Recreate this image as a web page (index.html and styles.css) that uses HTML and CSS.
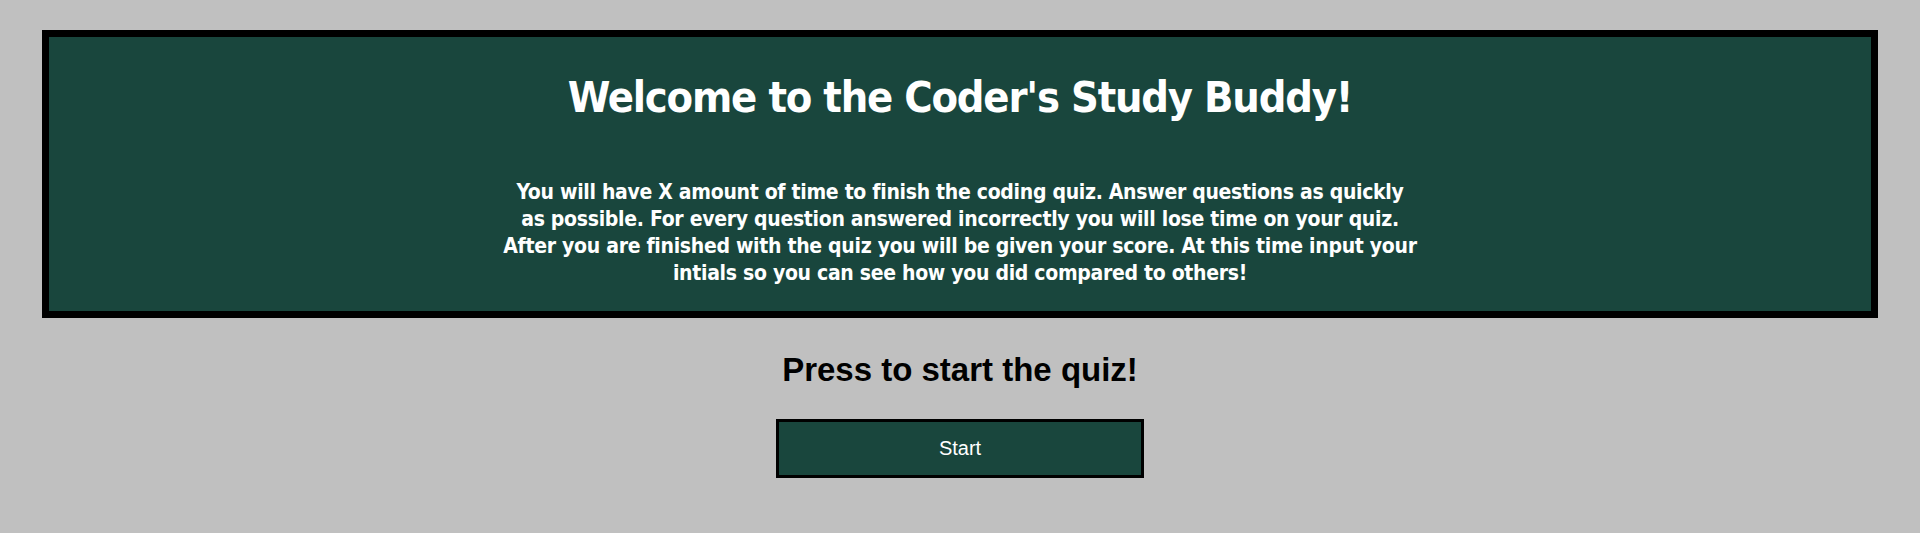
FILE: index.html
```html
<!DOCTYPE html>
<html lang="en">
<head>
<meta charset="utf-8">
<title>Coder's Study Buddy</title>
<link rel="stylesheet" href="styles.css">
</head>
<body>
  <header class="intro">
    <h1 class="intro-title">Welcome to the Coder's Study Buddy!</h1>
    <p class="intro-text">You will have X amount of time to finish the coding quiz. Answer questions as quickly<br>as possible. For every question answered incorrectly you will lose time on your quiz.<br>After you are finished with the quiz you will be given your score. At this time input your<br>intials so you can see how you did compared to others!</p>
  </header>
  <main class="start">
    <h1 class="start-title">Press to start the quiz!</h1>
    <button class="start-btn" type="button">Start</button>
  </main>
</body>
</html>
```
FILE: styles.css
```css
html, body {
  margin: 0;
  padding: 0;
}
body {
  background: #c0c0c0;
  font-family: "Liberation Sans", Arial, sans-serif;
  min-height: 533px;
}
.intro {
  margin: 30px 42px 0;
  height: 288px;
  box-sizing: border-box;
  border: 7px solid #000;
  background: #19463d;
  color: #fff;
  display: flex;
  flex-direction: column;
  align-items: center;
  font-family: "Liberation Sans Narrow", "Arial Narrow", "DejaVu Sans Condensed", sans-serif;
  font-weight: bold;
}
.intro-title {
  margin: 36px 0 0;
  font-size: 43px;
  line-height: 49px;
  letter-spacing: -1.2px;
  font-weight: bold;
}
.intro-text {
  margin: 57px 0 0;
  font-size: 21px;
  line-height: 27px;
  letter-spacing: -0.3px;
  text-align: center;
}
.start {
  display: flex;
  flex-direction: column;
  align-items: center;
}
.start-title {
  margin: 33px 0 0;
  font-size: 33px;
  line-height: 38px;
  font-weight: bold;
  color: #000;
}
.start-btn {
  margin-top: 30px;
  width: 368px;
  height: 59px;
  box-sizing: border-box;
  border: 3px solid #000;
  background: #19463d;
  color: #fff;
  font-family: "Liberation Sans", Arial, sans-serif;
  font-size: 20px;
  padding: 0;
  cursor: pointer;
}
```
